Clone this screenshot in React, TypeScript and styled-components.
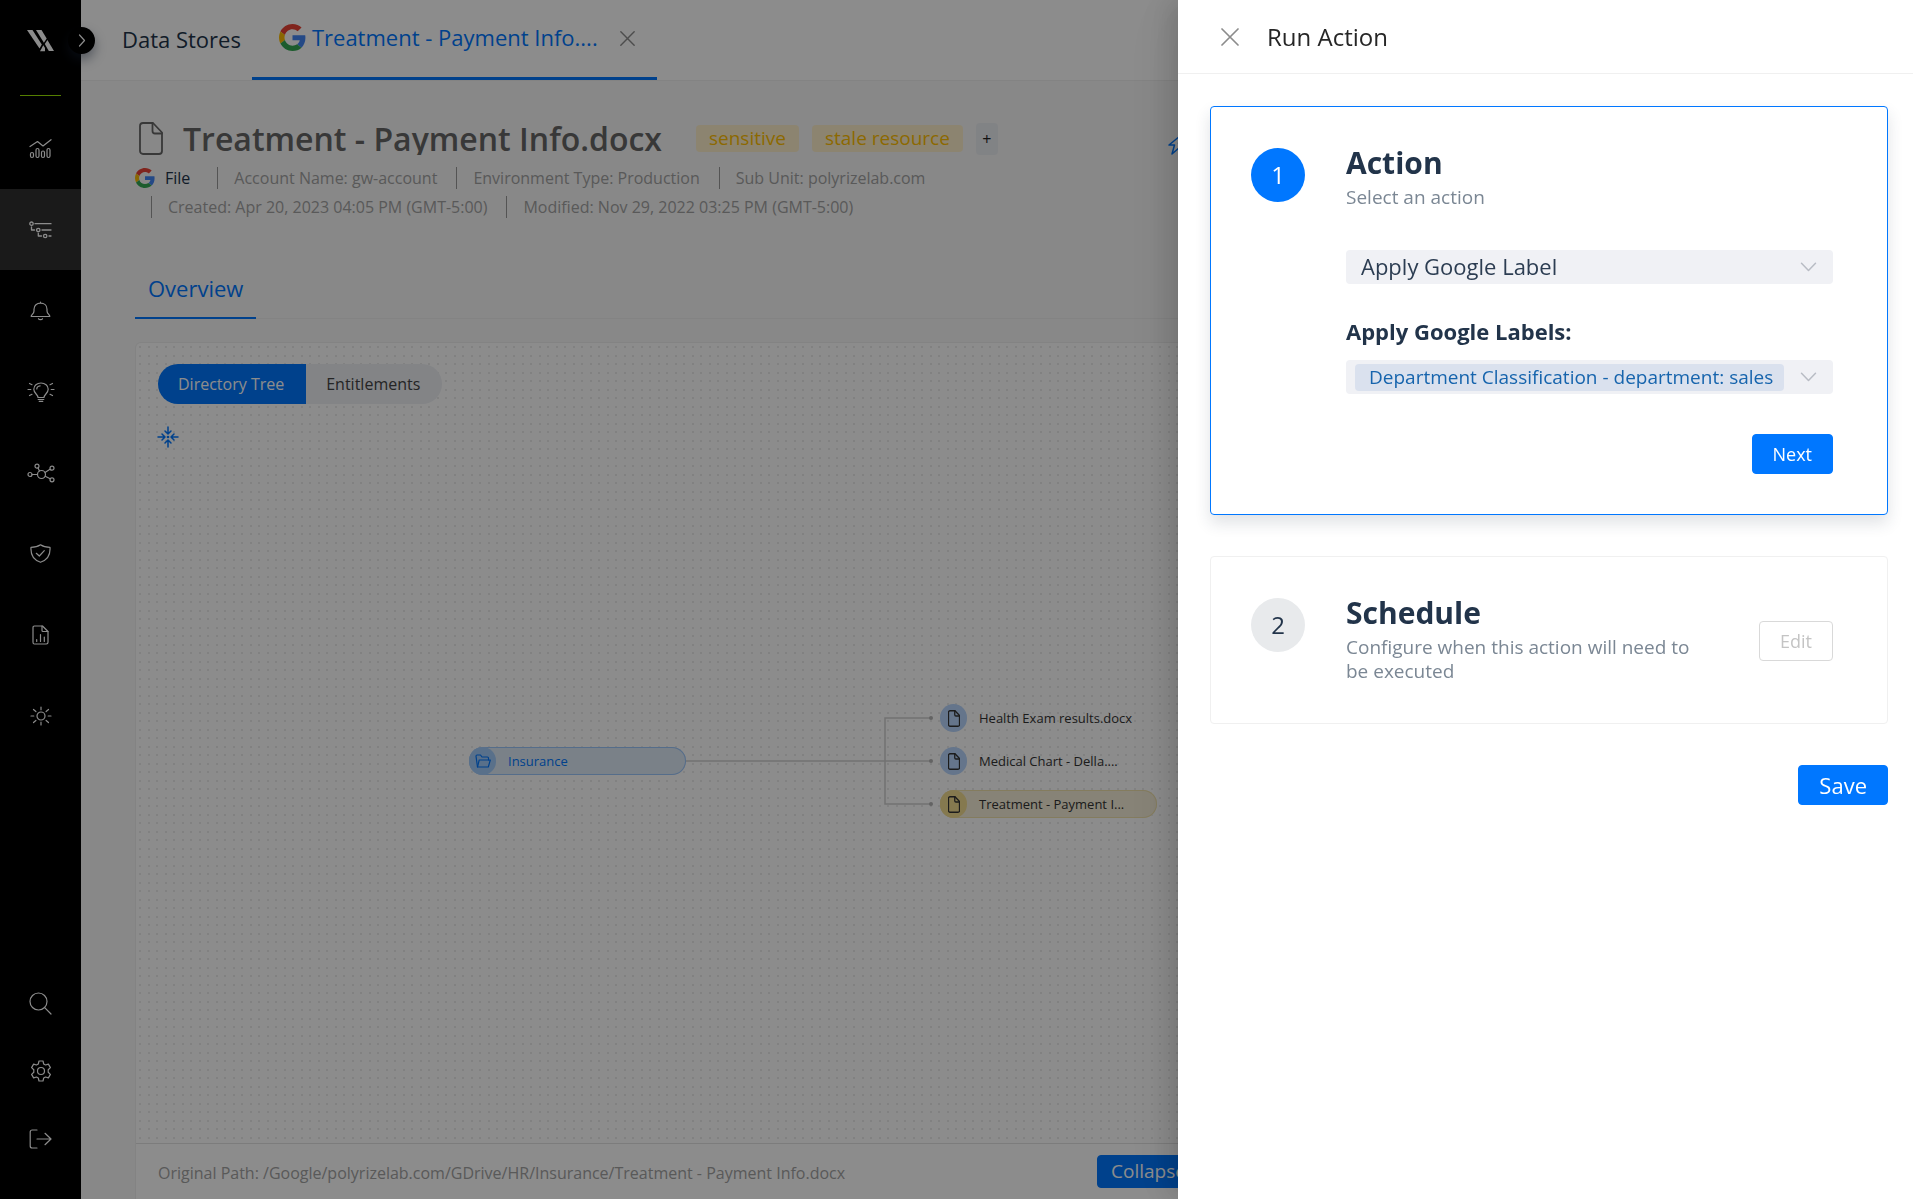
import React from "react";
import styled, { createGlobalStyle } from "styled-components";

const GlobalStyle = createGlobalStyle`
  *, *::before, *::after { box-sizing: border-box; }
  body {
    margin: 0;
    background: #f8f8f8;
    color: #22344a;
    font-family: "Open Sans", "Noto Sans", sans-serif;
    font-size: 16px;
  }
  button, select, input { font-family: inherit; }
  button { cursor: pointer; }
  h1, h2, h3, p { margin: 0; }
  svg { display: block; flex: none; }
`;

/* ---------- shell ---------- */

const Shell = styled.div`
  display: flex;
  height: 100vh;
  overflow: hidden;
`;

const Sidebar = styled.nav`
  position: relative;
  flex: none;
  width: 81px;
  display: flex;
  flex-direction: column;
  align-items: stretch;
  padding-bottom: 26px;
  background: #000;
  color: #fff;
`;

const Brand = styled.a`
  display: flex;
  align-items: center;
  justify-content: center;
  height: 81px;
  color: #fff;
`;

const BrandRule = styled.hr`
  width: 41px;
  height: 1px;
  margin: 14px 20px 12px;
  border: 0;
  background: #99e600;
`;

const Toggle = styled.button`
  position: absolute;
  top: 27px;
  right: -14px;
  width: 27px;
  height: 27px;
  display: flex;
  align-items: center;
  justify-content: center;
  padding: 0;
  border: 0;
  border-radius: 50%;
  background: #000;
  color: #fff;
  box-shadow: 0 6px 12px rgba(30, 45, 70, 0.45);
`;

const NavItem = styled.a<{ $active?: boolean; $compact?: boolean }>`
  display: flex;
  align-items: center;
  justify-content: center;
  height: ${(p) => (p.$compact ? "68px" : "81px")};
  color: #fff;
  background: ${(p) => (p.$active ? "#313131" : "transparent")};
`;

const Spacer = styled.div`
  flex: 1;
`;

const Main = styled.main`
  flex: 1;
  min-width: 0;
  display: flex;
  flex-direction: column;
`;

const TopBar = styled.header`
  flex: none;
  display: flex;
  align-items: stretch;
  gap: 11px;
  height: 81px;
  padding-left: 41px;
  background: #fff;
  border-bottom: 1px solid #eeeeee;
`;

const TopLink = styled.a`
  display: flex;
  align-items: center;
  padding-bottom: 2px;
  font-size: 22px;
  line-height: 30px;
  color: #22344a;
  text-decoration: none;
`;

const TopTab = styled.div`
  display: flex;
  align-items: center;
  padding: 0 22px 0 27px;
  border-bottom: 3px solid #0077ff;
`;

const TopTabLink = styled.a`
  display: flex;
  align-items: center;
  gap: 6px;
  margin-right: 22px;
  padding-bottom: 3px;
  font-size: 22px;
  line-height: 30px;
  color: #0077ff;
  text-decoration: none;
`;

const IconButton = styled.button`
  display: flex;
  padding: 0;
  border: 0;
  background: none;
  color: #8c8c8c;
`;

const Content = styled.section`
  flex: 1;
  min-height: 0;
  display: flex;
  flex-direction: column;
  padding: 41px 54px 0;
`;

const TitleRow = styled.div`
  display: flex;
  align-items: center;
  height: 33px;
  padding-left: 4px;
  color: #666;
`;

const Title = styled.h1`
  height: 33px;
  margin: 0 34px 0 20px;
  overflow: hidden;
  font-size: 32px;
  line-height: 34px;
  font-weight: 600;
  white-space: nowrap;
`;

const Tag = styled.span`
  height: 27px;
  margin-right: 13px;
  padding: 0 13px;
  border-radius: 4px;
  background: #fff0cc;
  color: #ffbf00;
  font-size: 19px;
  line-height: 26px;
  white-space: nowrap;
`;

const AddTag = styled.button`
  width: 22px;
  height: 32px;
  margin-right: 170px;
  padding: 0;
  border: 0;
  border-radius: 4px;
  background: #eceef2;
  color: #222;
  font-size: 16px;
  line-height: 32px;
`;

const BoltButton = styled(IconButton)`
  align-self: flex-end;
  color: #0077ff;
`;

const Meta = styled.ul`
  display: flex;
  flex-wrap: wrap;
  align-items: center;
  gap: 7px 0;
  max-width: 840px;
  margin: 12px 0 0;
  padding: 0;
  list-style: none;
  font-size: 16px;
  line-height: 22px;
`;

const MetaSource = styled.li`
  display: flex;
  align-items: center;
  gap: 10px;
  margin-right: 11px;
`;

const MetaItem = styled.li`
  margin-left: 16px;
  margin-right: 3px;
  padding-left: 16px;
  border-left: 1px solid #999;
  color: #a3a3a3;
  white-space: nowrap;
`;

const SubTabs = styled.div`
  display: flex;
  margin-top: 41px;
  border-bottom: 1px solid #eee;
`;

const SubTab = styled.button`
  height: 60px;
  margin-bottom: -1px;
  padding: 0 13px;
  border: 0;
  border-bottom: 2px solid #0077ff;
  background: none;
  color: #0077ff;
  font-size: 22px;
  line-height: 30px;
`;

const Panel = styled.section`
  flex: 1;
  min-height: 0;
  display: flex;
  flex-direction: column;
  margin-top: 23px;
  border: 1px solid #eee;
  border-bottom: 0;
  border-radius: 6px 6px 0 0;
  background: #fff;
`;

const Canvas = styled.div`
  position: relative;
  flex: 1;
  min-height: 0;
  padding: 21px 22px;
  border-bottom: 1px solid #e2e2e2;
  background-image:
    radial-gradient(circle at 4px 4px, #ececec 1px, transparent 1px),
    radial-gradient(circle at 13px 4px, #ececec 1px, transparent 1px),
    radial-gradient(circle at 4px 13px, #ececec 1px, transparent 1px),
    radial-gradient(circle at 13px 13px, #ececec 1px, transparent 1px);
  background-size: 17px 17px;
`;

const Segments = styled.div`
  display: inline-flex;
  overflow: hidden;
  border-radius: 20px;
`;

const Segment = styled.button<{ $on?: boolean }>`
  height: 40px;
  padding: 0 22px 0 20px;
  border: 0;
  background: ${(p) => (p.$on ? "#0077ff" : "#eef0f5")};
  color: ${(p) => (p.$on ? "#fff" : "#444")};
  font-size: 16px;
  line-height: 22px;
`;

const FitButton = styled(IconButton)`
  margin-top: 22px;
  margin-left: -1px;
  color: #0077ff;
`;

const Graph = styled.div`
  position: absolute;
  top: 360px;
  left: 333px;
  width: 690px;
  height: 116px;
`;

const Node = styled.a<{ $x: number; $y: number; $tone: "folder" | "file" | "current" }>`
  position: absolute;
  left: ${(p) => p.$x}px;
  top: ${(p) => p.$y}px;
  width: 217px;
  height: 28px;
  display: flex;
  align-items: center;
  gap: 12px;
  border-radius: 14px;
  font-size: 13px;
  line-height: 18px;
  text-decoration: none;
  white-space: nowrap;
  color: ${(p) => (p.$tone === "folder" ? "#0077ff" : "#333")};
  background: ${(p) => ({ folder: "#deebf8", file: "transparent", current: "#f6efd9" })[p.$tone]};
  box-shadow: ${(p) =>
    ({
      folder: "inset 0 0 0 1px #9cc6fb",
      file: "none",
      current: "inset 0 0 0 1px #f0e2ac",
    })[p.$tone]};
`;

const NodeIcon = styled.span<{ $tone: "folder" | "file" | "current" }>`
  width: 27px;
  height: 28px;
  display: flex;
  align-items: center;
  justify-content: center;
  border-radius: 14px;
  background: ${(p) => ({ folder: "#a3ccfc", file: "#b8d6fd", current: "#f2dc90" })[p.$tone]};
`;

const PanelFooter = styled.footer`
  flex: none;
  display: flex;
  align-items: center;
  height: 55px;
  padding: 0 22px;
  color: #a3a3a3;
`;

const FooterPath = styled.p`
  width: 939px;
  padding-top: 2px;
  font-size: 16px;
  line-height: 22px;
`;

/* ---------- drawer ---------- */

const Mask = styled.div`
  position: fixed;
  inset: 0;
  background: rgba(0, 0, 0, 0.45);
`;

const Drawer = styled.aside`
  position: fixed;
  top: 0;
  right: 0;
  bottom: 0;
  width: min(735px, 100%);
  overflow-y: auto;
  background: #fff;
  box-shadow: -8px 0 22px rgba(0, 0, 0, 0.1), -12px 0 38px rgba(0, 0, 0, 0.07),
    -16px 0 64px rgba(0, 0, 0, 0.04);
`;

const DrawerHeader = styled.header`
  display: flex;
  align-items: center;
  gap: 28px;
  height: 74px;
  padding: 0 43px;
  border-bottom: 1px solid #f0f0f0;
`;

const DrawerTitle = styled.h2`
  font-size: 24px;
  line-height: 32px;
  font-weight: 500;
  color: #262626;
`;

const DrawerBody = styled.form`
  display: flex;
  flex-direction: column;
  gap: 41px;
  padding: 32px 25px 32px 32px;
`;

const Step = styled.section<{ $active?: boolean }>`
  display: flex;
  align-items: flex-start;
  gap: 41px;
  padding: 41px 54px 40px 40px;
  border: 1px solid ${(p) => (p.$active ? "#0077ff" : "#f0f0f0")};
  border-radius: 4px;
  box-shadow: ${(p) => (p.$active ? "0 8px 16px rgba(34, 52, 74, 0.14)" : "none")};
`;

const StepNumber = styled.span<{ $active?: boolean }>`
  flex: none;
  width: 54px;
  height: 54px;
  border-radius: 50%;
  text-align: center;
  font-size: 24px;
  line-height: 54px;
  background: ${(p) => (p.$active ? "#0077ff" : "#e8eaec")};
  color: ${(p) => (p.$active ? "#fff" : "#22344a")};
`;

const StepBody = styled.div`
  flex: 1;
  min-width: 0;
  display: flex;
  flex-direction: column;
`;

const StepSummary = styled.div`
  flex: 1;
  min-width: 0;
  display: flex;
  align-items: center;
  gap: 64px;
`;

const StepTitle = styled.h3`
  font-size: 30px;
  line-height: 30px;
  font-weight: 700;
`;

const StepText = styled.p`
  margin-top: 7px;
  font-size: 19px;
  line-height: 24px;
  color: #7b8794;
`;

const Field = styled.div`
  display: flex;
  align-items: center;
  height: 34px;
  padding-right: 16px;
  border-radius: 4px;
  background: #f0f1f5;
  color: #b8bcc4;
`;

const ActionField = styled(Field)`
  margin-top: 41px;
`;

const PlainSelect = styled.select`
  appearance: none;
  flex: 1;
  min-width: 0;
  height: 34px;
  padding: 0 15px 2px;
  border: 0;
  background: transparent;
  color: #2c3d52;
  font-size: 22px;
  line-height: 30px;
`;

const ChipSelect = styled.select`
  appearance: none;
  flex: 1;
  min-width: 0;
  height: 27px;
  margin: 0 16px 0 9px;
  padding: 0 8px 2px 14px;
  border: 0;
  border-radius: 4px;
  background: #dae1ee;
  color: #1664ad;
  font-size: 19px;
  line-height: 26px;
`;

const FieldLabel = styled.label`
  margin: 32px 0 14px;
  font-size: 22px;
  line-height: 30px;
  font-weight: 700;
`;

const Button = styled.button`
  align-self: flex-end;
  flex: none;
  height: 40px;
  padding: 0 20px;
  border: 1px solid #0077ff;
  border-radius: 4px;
  background: #0077ff;
  color: #fff;
  font-size: 18px;
  line-height: 24px;
`;

const NextButton = styled(Button)`
  margin-top: 40px;
  font-weight: 500;
`;

const EditButton = styled(Button)`
  align-self: center;
  border-color: #d9d9d9;
  background: #fff;
  color: #c4c4c4;
`;

const SaveButton = styled(Button)`
  font-size: 22px;
`;

const FooterButton = styled(Button)`
  align-self: center;
  height: 33px;
  padding: 0 13px 2px;
  font-size: 19px;
`;

/* ---------- icons ---------- */

const stroke = {
  fill: "none",
  stroke: "currentColor",
  strokeLinecap: "round" as const,
  strokeLinejoin: "round" as const,
};

const LogoMark = () => (
  <svg width="27" height="22" viewBox="0 0 27 22" fill="currentColor">
    <path d="M0 0h5.5l9.3 14.6-2.3 4z" />
    <path d="M9 0h5.5l5.2 8.6-2.8 4.2z" />
    <path d="M20.4 10 27 21h-5.2l-4-7z" />
    <path d="M16.3 15.2 18 18v3.2h-5z" />
  </svg>
);

const GoogleMark = ({ size }: { size: number }) => (
  <svg width={size} height={size} viewBox="0 0 48 48" aria-hidden="true">
    <path fill="#EA4335" d="M24 9.5c3.54 0 6.71 1.22 9.21 3.6l6.85-6.85C35.9 2.38 30.47 0 24 0 14.62 0 6.51 5.38 2.56 13.22l7.98 6.19C12.43 13.72 17.74 9.5 24 9.5z" />
    <path fill="#4285F4" d="M46.98 24.55c0-1.57-.15-3.09-.38-4.55H24v9.02h12.94c-.58 2.96-2.26 5.48-4.78 7.18l7.73 6c4.51-4.18 7.09-10.36 7.09-17.65z" />
    <path fill="#FBBC05" d="M10.53 28.59c-.48-1.45-.76-2.99-.76-4.59s.27-3.14.76-4.59l-7.98-6.19C.92 16.46 0 20.12 0 24c0 3.88.92 7.54 2.56 10.78l7.97-6.19z" />
    <path fill="#34A853" d="M24 48c6.48 0 11.93-2.13 15.89-5.81l-7.73-6c-2.15 1.45-4.92 2.3-8.16 2.3-6.26 0-11.57-4.22-13.47-9.91l-7.98 6.19C6.51 42.62 14.62 48 24 48z" />
  </svg>
);

const Cross = ({ size }: { size: number }) => (
  <svg width={size} height={size} viewBox="0 0 18 18" {...stroke} strokeWidth="1.7">
    <path d="M1 1l16 16M17 1L1 17" />
  </svg>
);

const FileIcon = ({ width, height, weight }: { width: number; height: number; weight: number }) => (
  <svg width={width} height={height} viewBox="0 0 24 33" {...stroke} strokeWidth={weight}>
    <path d="M4 1h10l9 9.5V29a3 3 0 0 1-3 3H4a3 3 0 0 1-3-3V4a3 3 0 0 1 3-3z" />
    <path d="M13.5 1v8a2.5 2.5 0 0 0 2.5 2.5h7" />
  </svg>
);

const FolderIcon = () => (
  <svg width="16" height="14" viewBox="0 0 16 14" {...stroke} strokeWidth="1.2">
    <path d="M2.5 13 1 2.2C1 1.5 1.4 1 2 1h3.5l1.5 2h5.5c.6 0 1 .4 1 1v2" />
    <path d="M2.5 13h10.8L15.3 6H4.2z" />
  </svg>
);

const ChartIcon = () => (
  <svg width="23" height="20" viewBox="0 0 23 20" {...stroke} strokeWidth="1.2">
    <path d="M1 7.5 8.5 2.5 14 7l8-6.3" />
    <rect x="1.5" y="13.5" width="3" height="5" rx="1.5" />
    <rect x="7" y="9.5" width="3" height="9" rx="1.5" />
    <rect x="12.5" y="12" width="3" height="6.5" rx="1.5" />
    <rect x="18" y="9.5" width="3" height="9" rx="1.5" />
  </svg>
);

const TreeIcon = () => (
  <svg width="23" height="18" viewBox="0 0 23 18" {...stroke} strokeWidth="1.3">
    <circle cx="2.5" cy="2.7" r="1.7" />
    <circle cx="9.3" cy="9" r="1.7" />
    <circle cx="16.2" cy="15" r="1.7" />
    <path d="M6 2.7h16M13 9h9M20 15h2M2.5 6v3h3M9.3 12.2V15h3.2" />
  </svg>
);

const BellIcon = () => (
  <svg width="21" height="20" viewBox="0 0 21 20" {...stroke} strokeWidth="1.2">
    <path d="M10.5 1v1.2M1.2 15.5h18.6c.2-1.8-2.8-2.5-2.8-5.5V8.2c0-3.8-2.9-6-6.5-6S4 4.4 4 8.2V10c0 3-3 3.7-2.8 5.5z" />
    <path d="M8.5 17.7c.6 1.3 3.4 1.3 4 0" />
  </svg>
);

const BulbIcon = () => (
  <svg width="28" height="20" viewBox="0 0 28 20" {...stroke} strokeWidth="1.2">
    <path d="M11 15.5c0-3-4.2-4.3-4.2-8.3C6.8 3.5 10 1 14 1s7.2 2.5 7.2 6.2c0 4-4.2 5.3-4.2 8.3z" />
    <path d="M11.2 17.5h5.6M12.2 19.3h3.6M9.8 7c0-1.8 1.5-3 3.3-3.2" />
    <path d="M1 7.5h2.8M24.2 7.5H27M2.5 1.5 5 2.7M25.5 1.5 23 2.7M2.5 13.5 5 12.3M25.5 13.5 23 12.3" />
  </svg>
);

const NetworkIcon = () => (
  <svg width="28" height="20" viewBox="0 0 28 20" {...stroke} strokeWidth="1.2">
    <circle cx="14.5" cy="11.5" r="4" />
    <circle cx="10" cy="3.2" r="2" />
    <circle cx="25" cy="5.2" r="2" />
    <circle cx="3" cy="11.5" r="2" />
    <circle cx="25" cy="16.8" r="2" />
    <path d="M5 11.5h5.5M11 5l1.5 3M18 9.5l5-3.2M18.2 13.2l5 2.6" />
  </svg>
);

const ShieldIcon = () => (
  <svg width="21" height="19" viewBox="0 0 21 19" {...stroke} strokeWidth="1.2">
    <path d="M10.5.8c2.5 1.8 6 2.6 9.5 2.6.5 7-2.5 12.6-9.5 14.9C3.5 16 .5 10.4 1 3.4 4.5 3.4 8 2.6 10.5.8z" />
    <path d="M6.3 9.3l3 2.7 5-5.3" />
  </svg>
);

const ReportIcon = () => (
  <svg width="17" height="20" viewBox="0 0 17 20" {...stroke} strokeWidth="1.2">
    <path d="M2.5 1h8L16 6.5v10.8c0 1-.7 1.7-1.7 1.7H2.5C1.5 19 1 18.3 1 17.3V2.7C1 1.7 1.5 1 2.5 1z" />
    <path d="M10 1v4.5c0 .7.5 1 1 1h5M4.7 16.5v-2M8.5 16.5V9.5M12.3 16.5V12" />
  </svg>
);

const SunIcon = () => (
  <svg width="22" height="20" viewBox="0 0 22 20" {...stroke} strokeWidth="1.2">
    <circle cx="11" cy="10" r="4" />
    <path d="M11 1v2.8M11 16.2V19M1 10h2.8M18.2 10H21M3.5 3.5l2.4 2M18.5 3.5l-2.4 2M3.5 16.5l2.4-2M18.5 16.5l-2.4-2" />
  </svg>
);

const SearchIcon = () => (
  <svg width="23" height="23" viewBox="0 0 23 23" {...stroke} strokeWidth="1.2">
    <circle cx="9.5" cy="9.5" r="8.5" />
    <path d="M15.7 15.7 22 22" />
  </svg>
);

const GearIcon = () => (
  <svg width="22" height="22" viewBox="0 0 22 22" {...stroke} strokeWidth="1.2">
    <circle cx="11" cy="11" r="3.5" />
    <path d="M9 1h4l.7 3 1.8 1 2.9-.9 2 3.5-2.2 2.1v2.6l2.2 2.1-2 3.5-2.9-.9-1.8 1L13 21H9l-.7-3-1.8-1-2.9.9-2-3.5 2.2-2.1V9.7L1.6 7.6l2-3.5 2.9.9 1.8-1z" />
  </svg>
);

const LogoutIcon = () => (
  <svg width="23" height="20" viewBox="0 0 23 20" {...stroke} strokeWidth="1.2">
    <path d="M8 1H3.2C2 1 1.2 1.8 1.2 3v14c0 1.2.8 2 2 2H8M8 10h14M16 4.3 22 10l-6 5.7" />
  </svg>
);

const BoltIcon = () => (
  <svg width="18" height="20" viewBox="0 0 18 20" {...stroke} strokeWidth="1.5">
    <path d="M12 1 1 10h5.5L4 19 16 8.5h-5.5z" />
  </svg>
);

const CollapseArrows = () => (
  <svg width="22" height="22" viewBox="0 0 22 22" {...stroke} strokeWidth="1.5">
    <path d="M11 1v6.5M8 5l3 3 3-3M11 21v-6.5M8 17l3-3 3 3M1 11h6.5M5 8l3 3-3 3M21 11h-6.5M17 8l-3 3 3 3" />
    <circle cx="11" cy="11" r=".6" fill="currentColor" />
  </svg>
);

const ChevronDown = () => (
  <svg width="17" height="10" viewBox="0 0 17 10" {...stroke} strokeWidth="1.5">
    <path d="M1.5 1.2l7 7.3 7-7.3" />
  </svg>
);

const ChevronRight = () => (
  <svg width="8" height="13" viewBox="0 0 8 13" {...stroke} strokeWidth="1.2">
    <path d="M1.5 1l5 5.5-5 5.5" />
  </svg>
);

const Edges = () => (
  <svg width="690" height="116" viewBox="0 0 690 116" fill="none" stroke="#cfcfcf">
    <path d="M216 58h246M462 15h-46v86h46" strokeWidth="1.5" />
    <g fill="#b4b4b4" stroke="none">
      <circle cx="462" cy="15" r="2" />
      <circle cx="462" cy="58" r="2" />
      <circle cx="462" cy="101" r="2" />
    </g>
  </svg>
);

/* ---------- data ---------- */

const primaryNav = [
  { label: "Dashboard", icon: <ChartIcon /> },
  { label: "Data stores", icon: <TreeIcon />, active: true },
  { label: "Alerts", icon: <BellIcon /> },
  { label: "Insights", icon: <BulbIcon /> },
  { label: "Connections", icon: <NetworkIcon /> },
  { label: "Policies", icon: <ShieldIcon /> },
  { label: "Reports", icon: <ReportIcon /> },
  { label: "Automation", icon: <SunIcon /> },
];

const utilityNav = [
  { label: "Search", icon: <SearchIcon /> },
  { label: "Settings", icon: <GearIcon /> },
  { label: "Log out", icon: <LogoutIcon /> },
];

const metaItems = [
  "Account Name: gw-account",
  "Environment Type: Production",
  "Sub Unit: polyrizelab.com",
  "Created: Apr 20, 2023 04:05 PM (GMT-5:00)",
  "Modified: Nov 29, 2022 03:25 PM (GMT-5:00)",
];

const nodes = [
  { text: "Insurance", tone: "folder" as const, x: 0, y: 44 },
  { text: "Health Exam results.docx", tone: "file" as const, x: 471, y: 1 },
  { text: "Medical Chart - Della....", tone: "file" as const, x: 471, y: 44 },
  { text: "Treatment - Payment I...", tone: "current" as const, x: 471, y: 87 },
];

export default function App() {
  return (
    <>
      <GlobalStyle />
      <Shell>
        <Sidebar aria-label="Main">
          <Brand href="#" aria-label="Home">
            <LogoMark />
          </Brand>
          <BrandRule />
          {primaryNav.map((item) => (
            <NavItem key={item.label} href="#" aria-label={item.label} $active={item.active}>
              {item.icon}
            </NavItem>
          ))}
          <Spacer />
          {utilityNav.map((item) => (
            <NavItem key={item.label} href="#" aria-label={item.label} $compact>
              {item.icon}
            </NavItem>
          ))}
          <Toggle type="button" aria-label="Expand menu">
            <ChevronRight />
          </Toggle>
        </Sidebar>

        <Main>
          <TopBar>
            <TopLink href="#">Data Stores</TopLink>
            <TopTab>
              <TopTabLink href="#">
                <GoogleMark size={27} />
                Treatment - Payment Info....
              </TopTabLink>
              <IconButton type="button" aria-label="Close tab">
                <Cross size={15} />
              </IconButton>
            </TopTab>
          </TopBar>

          <Content>
            <TitleRow>
              <FileIcon width={24} height={33} weight={1.8} />
              <Title>Treatment - Payment Info.docx</Title>
              <Tag>sensitive</Tag>
              <Tag>stale resource</Tag>
              <AddTag type="button" aria-label="Add tag">+</AddTag>
              <BoltButton type="button" aria-label="Run action">
                <BoltIcon />
              </BoltButton>
            </TitleRow>
            <Meta>
              <MetaSource>
                <GoogleMark size={20} />
                File
              </MetaSource>
              {metaItems.map((text) => (
                <MetaItem key={text}>{text}</MetaItem>
              ))}
            </Meta>
            <SubTabs>
              <SubTab type="button">Overview</SubTab>
            </SubTabs>
            <Panel>
              <Canvas>
                <Segments>
                  <Segment type="button" $on>Directory Tree</Segment>
                  <Segment type="button">Entitlements</Segment>
                </Segments>
                <FitButton type="button" aria-label="Fit to view">
                  <CollapseArrows />
                </FitButton>
                <Graph>
                  <Edges />
                  {nodes.map((n) => (
                    <Node key={n.text} href="#" $x={n.x} $y={n.y} $tone={n.tone}>
                      <NodeIcon $tone={n.tone}>
                        {n.tone === "folder" ? (
                          <FolderIcon />
                        ) : (
                          <FileIcon width={12} height={17} weight={2.6} />
                        )}
                      </NodeIcon>
                      {n.text}
                    </Node>
                  ))}
                </Graph>
              </Canvas>
              <PanelFooter>
                <FooterPath>
                  Original Path: /Google/polyrizelab.com/GDrive/HR/Insurance/Treatment - Payment Info.docx
                </FooterPath>
                <FooterButton type="button">Collapse</FooterButton>
              </PanelFooter>
            </Panel>
          </Content>
        </Main>
      </Shell>

      <Mask />
      <Drawer role="dialog" aria-labelledby="drawer-title">
        <DrawerHeader>
          <IconButton type="button" aria-label="Close">
            <Cross size={18} />
          </IconButton>
          <DrawerTitle id="drawer-title">Run Action</DrawerTitle>
        </DrawerHeader>
        <DrawerBody onSubmit={(e) => e.preventDefault()}>
          <Step $active>
            <StepNumber $active>1</StepNumber>
            <StepBody>
              <StepTitle>Action</StepTitle>
              <StepText>Select an action</StepText>
              <ActionField>
                <PlainSelect aria-label="Select an action" defaultValue="label">
                  <option value="label">Apply Google Label</option>
                </PlainSelect>
                <ChevronDown />
              </ActionField>
              <FieldLabel htmlFor="google-labels">Apply Google Labels:</FieldLabel>
              <Field>
                <ChipSelect id="google-labels" defaultValue="sales">
                  <option value="sales">Department Classification - department: sales</option>
                </ChipSelect>
                <ChevronDown />
              </Field>
              <NextButton type="button">Next</NextButton>
            </StepBody>
          </Step>
          <Step>
            <StepNumber>2</StepNumber>
            <StepSummary>
              <StepBody>
                <StepTitle>Schedule</StepTitle>
                <StepText>Configure when this action will need to be executed</StepText>
              </StepBody>
              <EditButton type="button" disabled>Edit</EditButton>
            </StepSummary>
          </Step>
          <SaveButton type="submit">Save</SaveButton>
        </DrawerBody>
      </Drawer>
    </>
  );
}
